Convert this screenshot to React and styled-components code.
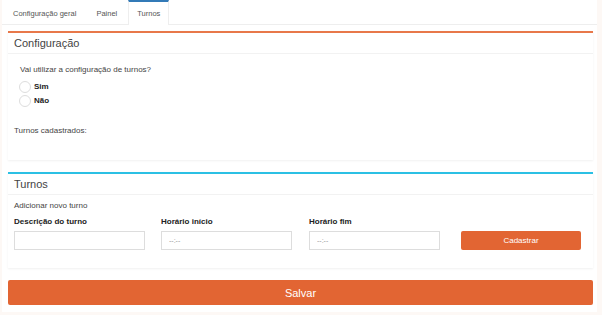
import React from "react";
import styled, { createGlobalStyle } from "styled-components";

const Global = createGlobalStyle`
  html, body {
    margin: 0;
    padding: 0;
    background: #fdf8f5;
    font-family: "Liberation Sans", Arial, sans-serif;
    color: #333;
  }
`;

export default () => (
  <>
    <Global />
    <Page>
      <Tabs>
        <Tab>Configuração geral</Tab>
        <Tab>Painel</Tab>
        <Tab active>Turnos</Tab>
      </Tabs>
      <Body>
        <Panel accent="#e8784a">
          <PanelHeader>Configuração</PanelHeader>
          <PanelContent>
            <Question>Vai utilizar a configuração de turnos?</Question>
            <Radio>
              <Circle />
              Sim
            </Radio>
            <Radio>
              <Circle />
              Não
            </Radio>
            <Listed>Turnos cadastrados:</Listed>
          </PanelContent>
        </Panel>
        <Panel accent="#2bc0e4">
          <PanelHeader>Turnos</PanelHeader>
          <PanelContent>
            <Small>Adicionar novo turno</Small>
            <Fields>
              <Field>
                <Label>Descrição do turno</Label>
                <Input />
              </Field>
              <Field>
                <Label>Horário início</Label>
                <Input placeholder="--:--" />
              </Field>
              <Field shift={1}>
                <Label>Horário fim</Label>
                <Input placeholder="--:--" />
              </Field>
              <Field shift={5}>
                <Label>&nbsp;</Label>
                <Button>Cadastrar</Button>
              </Field>
            </Fields>
          </PanelContent>
        </Panel>
        <Save>Salvar</Save>
      </Body>
    </Page>
  </>
);

const Page = styled.div`
  margin: 0 5px 0 2px;
  background: #fff;
  height: 312px;
  box-sizing: border-box;
`;

const Tabs = styled.div`
  display: flex;
  height: 24px;
  border-bottom: 1px solid #eee;
  padding-left: 2px;
`;

const Tab = styled.div`
  display: flex;
  align-items: center;
  font-size: 7.5px;
  color: #555;
  border-top: 2px solid ${p => (p.active ? "#337ab7" : "transparent")};
  background: ${p => (p.active ? "#fff" : "transparent")};
  border-left: 1px solid ${p => (p.active ? "#eee" : "transparent")};
  border-right: 1px solid ${p => (p.active ? "#eee" : "transparent")};
  margin-bottom: -1px;
  padding: ${p => (p.active ? "0 8px 0 8px" : "0 10px 0 8px")};
`;

const Body = styled.div`
  padding: 6px 4px 0 6px;
  display: flex;
  flex-direction: column;
`;

const Panel = styled.div`
  border-top: 2px solid ${p => p.accent};
  box-shadow: 0 1px 2px rgba(0, 0, 0, 0.06);
  margin-bottom: 12px;
  background: #fff;
`;

const PanelHeader = styled.div`
  height: 20px;
  line-height: 20px;
  padding-left: 6px;
  font-size: 11px;
  color: #444;
  border-bottom: 1px solid #f2f2f2;
`;

const PanelContent = styled.div`
  padding: 11px 6px 0 6px;
  font-size: 8px;
  line-height: 10px;
`;

const Question = styled.div`
  padding-left: 6px;
  color: #444;
  margin-bottom: 5px;
`;

const Radio = styled.div`
  display: flex;
  align-items: center;
  font-weight: bold;
  color: #222;
  height: 14px;
  padding-left: 5px;
`;

const Circle = styled.span`
  width: 12px;
  height: 12px;
  border-radius: 50%;
  border: 1px solid #ddd;
  margin-right: 3px;
  box-sizing: border-box;
`;

const Listed = styled.div`
  color: #444;
  padding: 18px 0 24px 0;
`;

const Small = styled.div`
  color: #444;
  margin-top: -5px;
  margin-bottom: 6px;
`;

const Fields = styled.div`
  display: grid;
  grid-template-columns: 131px 131px 132px 125px;
  column-gap: 16px;
  padding-bottom: 18px;
`;

const Field = styled.div`
  display: flex;
  flex-direction: column;
  margin-left: ${p => p.shift || 0}px;
`;

const Label = styled.div`
  font-weight: bold;
  color: #222;
  height: 10px;
  margin-bottom: 4px;
`;

const Input = styled.input`
  height: 19px;
  box-sizing: border-box;
  border: 1px solid #ddd;
  font-size: 7px;
  padding: 0 7px;
  font-family: inherit;
  &::placeholder {
    color: #999;
  }
`;

const Button = styled.div`
  height: 19px;
  background: #e26533;
  color: #fff;
  font-size: 8px;
  display: flex;
  align-items: center;
  justify-content: center;
  border-radius: 2px;
`;

const Save = styled.div`
  height: 25px;
  background: #e26533;
  color: #fff;
  font-size: 11px;
  display: flex;
  align-items: center;
  justify-content: center;
  border-radius: 2px;
`;
